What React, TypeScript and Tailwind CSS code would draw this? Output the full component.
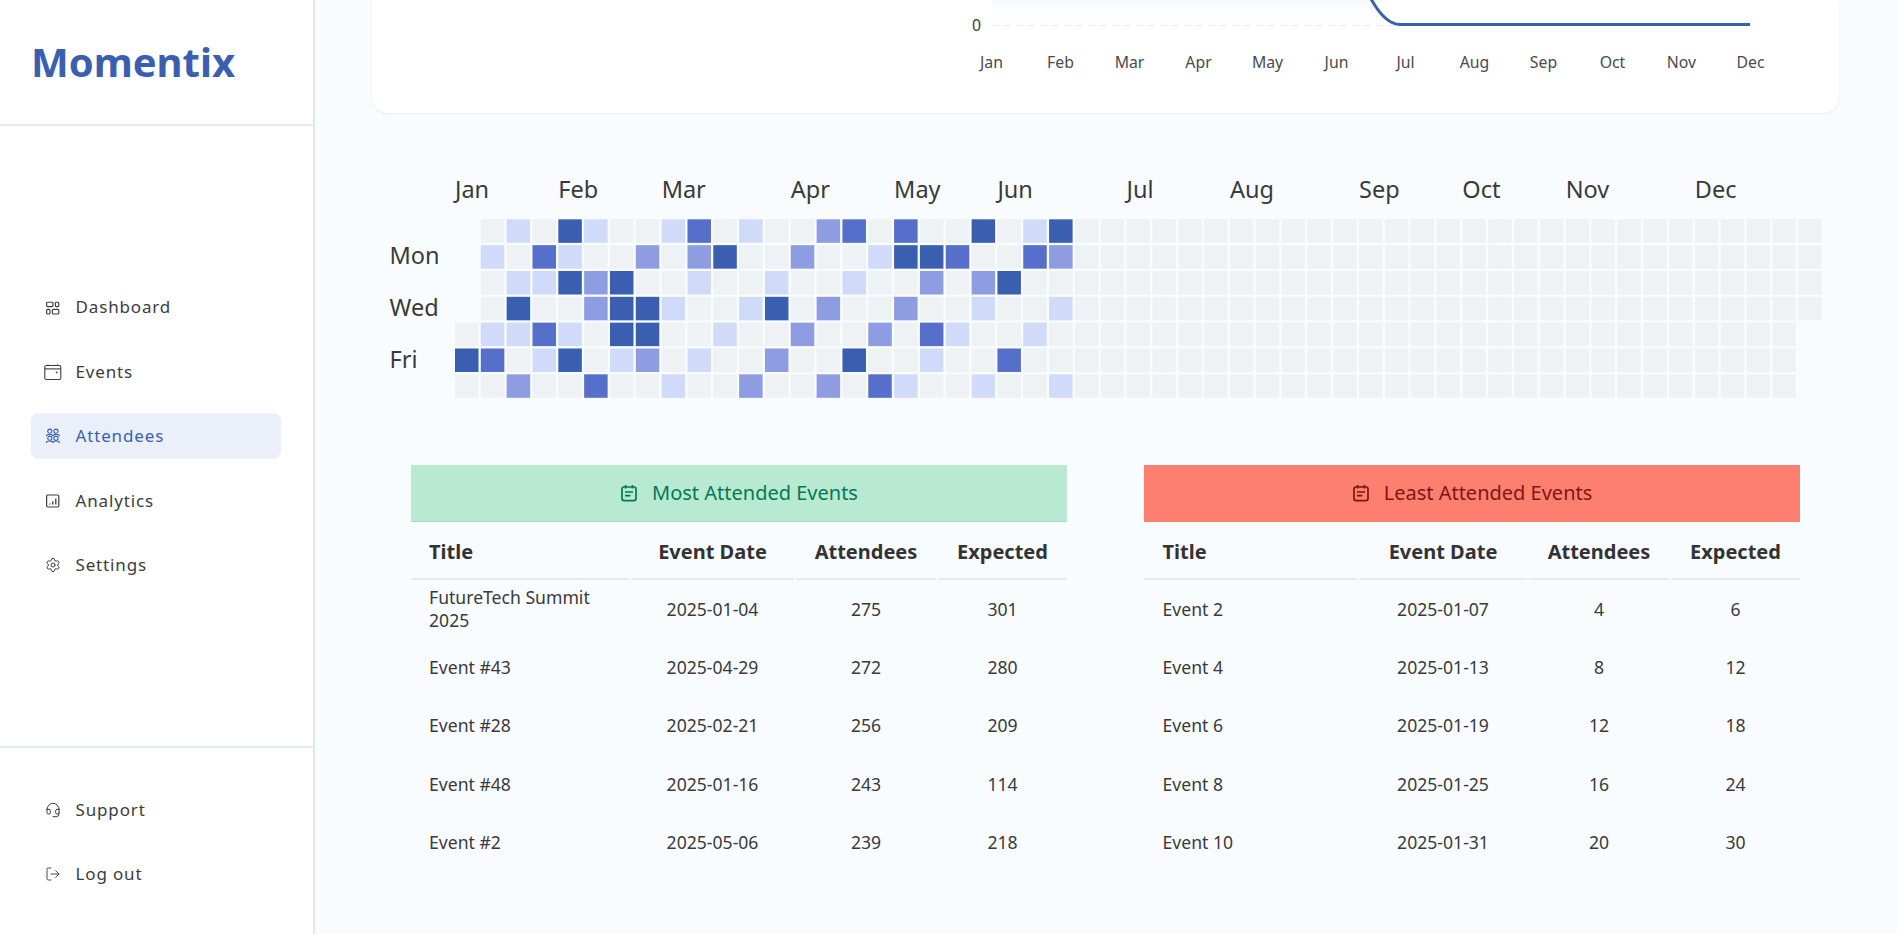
import React from "react";
import { Settings, Headset, LogOut } from "lucide-react";

const BLUE = "#3a5fb0";
const FONT = '"Noto Sans", sans-serif';

const LEVELS = ["#eef2f5", "#d0dbf9", "#8e9de2", "#566fca", "#3a5fb0"];
const ACTIVE: (number | null)[][] = [
  [null,0,1,0,4,1,0,0,1,3,0,1,0,0,2,3,0,3,0,0,4,0,1,4],
  [null,1,0,3,1,0,0,2,0,2,4,0,0,2,0,0,1,4,4,3,0,0,3,2],
  [null,0,1,1,4,2,4,0,0,1,0,0,1,0,0,1,0,0,2,0,2,4,0,0],
  [null,0,4,0,0,2,4,4,1,0,0,1,4,0,2,0,0,2,0,0,1,0,0,1],
  [0,1,1,3,1,0,4,4,0,0,1,0,0,2,0,0,2,0,3,1,0,0,1,0],
  [4,3,0,1,4,0,1,2,0,1,0,0,2,0,0,4,0,0,1,0,0,3,0,0],
  [0,0,2,0,0,3,0,0,1,0,0,2,0,0,2,0,3,1,0,0,1,0,0,1],
];
const MONTHS: [string, number][] = [["Jan",0],["Feb",4],["Mar",8],["Apr",13],["May",17],["Jun",21],["Jul",26],["Aug",30],["Sep",35],["Oct",39],["Nov",43],["Dec",48]];
const PITCH = 25.83;
const X0 = 455;
const Y0 = 219.33;

function IconDashboard() {
  return (
    <svg width="16" height="16" viewBox="0 0 16 16" fill="none" stroke="currentColor" strokeWidth="1.15">
      <rect x="1.6" y="3.2" width="6.4" height="4.4" rx="1" />
      <rect x="10.4" y="3.2" width="3.4" height="4.4" rx="1" />
      <rect x="1.6" y="10.4" width="3.4" height="4.6" rx="1" />
      <rect x="7.4" y="10.4" width="6.4" height="4.6" rx="1" />
    </svg>
  );
}
function IconEvents() {
  return (
    <svg width="16" height="16" viewBox="0 0 16 16" fill="none" stroke="currentColor" strokeWidth="1.1" className="overflow-visible">
      <rect x="-0.2" y="1.5" width="16" height="14" rx="1.6" />
      <path d="M-0.2 4.9H15.8" />
      <path d="M3 0.6V1.5M12.6 0.6V1.5" />
      <circle cx="11.6" cy="8.4" r="0.9" fill="currentColor" stroke="none" />
    </svg>
  );
}
function IconAttendees() {
  return (
    <svg width="16" height="16" viewBox="0 0 16 16" fill="none" stroke="currentColor" strokeWidth="1.05">
      <circle cx="4.8" cy="3.2" r="2.1" />
      <circle cx="11" cy="3.2" r="2.1" />
      <path d="M1.3 8.2C1.3 5.5 7.9 5.5 7.9 8.2M8 8.2C8 5.5 14.5 5.5 14.5 8.2" />
      <circle cx="4.8" cy="10.2" r="2.1" />
      <circle cx="11" cy="10.2" r="2.1" />
      <path d="M1.3 15C1.3 12.4 7.9 12.4 7.9 15M8 15C8 12.4 14.5 12.4 14.5 15" />
    </svg>
  );
}
function IconAnalytics() {
  return (
    <svg width="16" height="16" viewBox="0 0 16 16" fill="none" stroke="currentColor">
      <rect x="1.6" y="2" width="12.2" height="12" rx="1.2" strokeWidth="1.2" />
      <path d="M4.8 11.6V10.4M7.8 11.6V8.2M10.8 11.6V5.6" strokeWidth="1.3" />
    </svg>
  );
}
function IconCalendarNote() {
  return (
    <svg width="18" height="18" viewBox="0 0 18 18" fill="none" stroke="currentColor" strokeWidth="1.7">
      <rect x="2" y="3" width="14" height="13.6" rx="2" />
      <path d="M5.6 1V4.4M12.4 1V4.4" />
      <path d="M5 8H13M5 11.6H10.4" />
    </svg>
  );
}

function NavItem({ icon, label, active }: { icon: React.ReactNode; label: string; active?: boolean }) {
  return (
    <div className={"flex h-[46px] items-center rounded-[8px] pl-[14px] " + (active ? "bg-[#ebeffa] text-[#3a5fb0]" : "text-[#3c3c3c]")}>
      <span className="flex h-4 w-4 items-center justify-center">{icon}</span>
      <span className="ml-[14.5px] text-[17px] tracking-[0.85px]">{label}</span>
    </div>
  );
}

function Sidebar() {
  return (
    <aside className="flex h-full w-[315px] shrink-0 flex-col border-r-2 border-[#e3e9f1] bg-white">
      <div className="flex h-[126px] shrink-0 items-center border-b-2 border-[#e8ebef] pl-[31px]">
        <span className="text-[40px] font-bold text-[#3a5fb0]">Momentix</span>
      </div>
      <nav className="flex flex-1 flex-col justify-center gap-[18.5px] pl-[31px] pr-[32px]">
        <NavItem icon={<IconDashboard />} label="Dashboard" />
        <NavItem icon={<IconEvents />} label="Events" />
        <NavItem icon={<IconAttendees />} label="Attendees" active />
        <NavItem icon={<IconAnalytics />} label="Analytics" />
        <NavItem icon={<Settings size={16} strokeWidth={1.5} />} label="Settings" />
      </nav>
      <div className="flex h-[188px] shrink-0 flex-col justify-center gap-[18px] border-t-2 border-[#e8ebef] pl-[31px] pr-[32px] pt-[1.5px]">
        <NavItem icon={<Headset size={16} strokeWidth={1.5} />} label="Support" />
        <NavItem icon={<LogOut size={18} strokeWidth={1.4} />} label="Log out" />
      </div>
    </aside>
  );
}

function ChartCard() {
  const labels = ["Jan","Feb","Mar","Apr","May","Jun","Jul","Aug","Sep","Oct","Nov","Dec"];
  return (
    <div className="ml-[57px] h-[113px] w-[1467px] rounded-b-[16px] bg-white shadow-[0_1px_2px_rgba(30,50,90,0.08)]">
      <svg width="1467" height="113" viewBox="372 0 1467 113" style={{ fontFamily: FONT }}>
        <defs>
          <linearGradient id="areaFade" x1="0" y1="0" x2="0" y2="1">
            <stop offset="0" stopColor="#3a5fb0" stopOpacity="0.028" />
            <stop offset="1" stopColor="#3a5fb0" stopOpacity="0" />
          </linearGradient>
        </defs>
        <path d="M992 0H1371C1380 15 1390 24.5 1399 24.5H992Z" fill="url(#areaFade)" />
        <line x1="992" y1="25.5" x2="1400" y2="25.5" stroke="#e6e8ec" strokeDasharray="6 6" />
        <path d="M1371 -1C1380 15 1390 24.5 1400 24.5H1750" fill="none" stroke={BLUE} strokeWidth="3" />
        <text x="981" y="31" textAnchor="end" fontSize="15.8" fill="#3a3a3a">0</text>
        {labels.map((m, i) => (
          <text key={m} x={991.5 + i * 69} y="68" textAnchor="middle" fontSize="15.8" fill="#4a4a4a">{m}</text>
        ))}
      </svg>
    </div>
  );
}

function Heatmap() {
  const cells: React.ReactNode[] = [];
  for (let r = 0; r < 7; r++) {
    const start = r < 4 ? 1 : 0;
    const end = r < 4 ? 52 : 51;
    for (let c = start; c <= end; c++) {
      const lv = ACTIVE[r][c] ?? 0;
      cells.push(
        <rect key={r + "-" + c} x={X0 + c * PITCH} y={Y0 + r * PITCH} width="23.5" height="23.5" fill={LEVELS[lv]} />
      );
    }
  }
  return (
    <svg width="1467" height="240" viewBox="372 170 1467 240" className="mt-[57px] ml-[57px] block" style={{ fontFamily: FONT }}>
      {MONTHS.map(([m, c]) => (
        <text key={m} x={X0 + c * PITCH} y="197.5" fontSize="23.5" fill="#3a3a3a">{m}</text>
      ))}
      <text x="389.5" y="264" fontSize="23.5" fill="#3a3a3a">Mon</text>
      <text x="389.5" y="315.7" fontSize="23.5" fill="#3a3a3a">Wed</text>
      <text x="389.5" y="367.5" fontSize="23.5" fill="#3a3a3a">Fri</text>
      {cells}
    </svg>
  );
}

type Row = [string, string, string, string];

function EventTable({ title, headerClass, cols, rows, pad }: { title: string; headerClass: string; cols: string; rows: Row[]; pad: string }) {
  return (
    <div className="w-[656px]">
      <div className={"flex h-[57px] items-center justify-center gap-[14px] border-b " + headerClass}>
        <IconCalendarNote />
        <span className="text-[20px]">{title}</span>
      </div>
      <div className={"grid gap-x-[2px] " + cols}>
        {["Title", "Event Date", "Attendees", "Expected"].map((h, i) => (
          <div key={h} className={"flex h-[58px] items-center border-b-2 border-[#e6e9ee] pt-[3px] text-[20px] font-bold text-[#333333] " + (i === 0 ? pad : "justify-center")}>
            {h}
          </div>
        ))}
        {rows.map((row) =>
          row.map((v, i) => (
            <div key={row[0] + i} className={"flex h-[58.3px] items-center text-[17.6px] leading-[23px] text-[#3a3a3a] " + (i === 0 ? pad + " pr-[16px]" : "justify-center")}>
              {v}
            </div>
          ))
        )}
      </div>
    </div>
  );
}

const MOST: Row[] = [
  ["FutureTech Summit 2025", "2025-01-04", "275", "301"],
  ["Event #43", "2025-04-29", "272", "280"],
  ["Event #28", "2025-02-21", "256", "209"],
  ["Event #48", "2025-01-16", "243", "114"],
  ["Event #2", "2025-05-06", "239", "218"],
];
const LEAST: Row[] = [
  ["Event 2", "2025-01-07", "4", "6"],
  ["Event 4", "2025-01-13", "8", "12"],
  ["Event 6", "2025-01-19", "12", "18"],
  ["Event 8", "2025-01-25", "16", "24"],
  ["Event 10", "2025-01-31", "20", "30"],
];

export default function App() {
  return (
    <div className="flex h-screen w-full overflow-hidden bg-[#f8fcff]" style={{ fontFamily: FONT }}>
      <Sidebar />
      <main className="flex-1">
        <ChartCard />
        <Heatmap />
        <div className="ml-[96px] mt-[55px] flex gap-[77px]">
          <EventTable
            title="Most Attended Events"
            headerClass="bg-[#b8ead3] border-[#a3dfc2] text-[#04794f]"
            cols="grid-cols-[218px_163px_140px_129px]"
            rows={MOST}
            pad="pl-[18px]"
          />
          <EventTable
            title="Least Attended Events"
            headerClass="bg-[#fd7f70] border-[#f5806f] text-[#7f1610]"
            cols="grid-cols-[213px_168px_140px_129px]"
            rows={LEAST}
            pad="pl-[18.5px]"
          />
        </div>
      </main>
    </div>
  );
}
